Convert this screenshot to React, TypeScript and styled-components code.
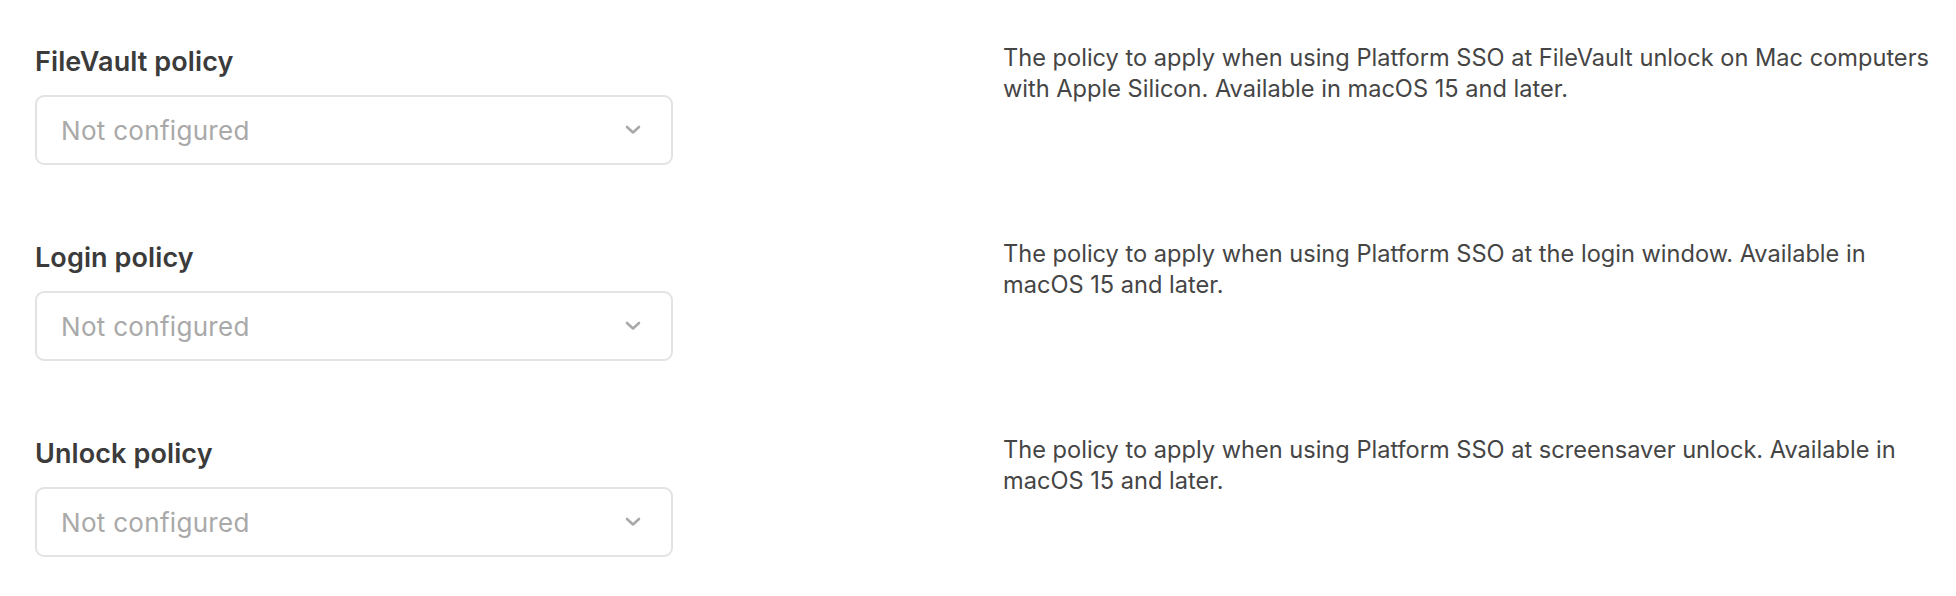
import React from "react";
import styled, { createGlobalStyle } from "styled-components";

const Global = createGlobalStyle`
  html, body { margin: 0; padding: 0; background: #ffffff; }
  body { font-family: Inter, "Noto Sans", sans-serif; -webkit-font-smoothing: antialiased; }
`;

const Page = styled.div`
  display: flex;
  flex-direction: column;
  gap: 77px;
  padding: 46px 13px 0 35px;
`;

const Row = styled.div`
  display: grid;
  grid-template-columns: 638px 1fr;
  column-gap: 330px;
  align-items: start;
`;

const Field = styled.div`
  display: flex;
  flex-direction: column;
  gap: 17px;
`;

const Label = styled.label`
  font-size: 27px;
  font-weight: 600;
  color: #3b3b3b;
  line-height: 32px;
  letter-spacing: 0.1px;
`;

const Select = styled.div`
  box-sizing: border-box;
  height: 70px;
  border: 2px solid #e3e3e3;
  border-radius: 9px;
  display: flex;
  align-items: center;
  justify-content: space-between;
  padding: 0 30px 0 24px;
  background: #fff;
`;

const Placeholder = styled.span`
  font-size: 26px;
  color: #a9a9a9;
  letter-spacing: 0.3px;
`;

const Description = styled.p`
  margin: -4px 0 0;
  font-size: 23.6px;
  line-height: 31px;
  color: #454545;
`;

const Chevron = () => (
  <svg width="16" height="10" viewBox="0 0 16 10" fill="none">
    <path d="M2 2l6 5.5L14 2" stroke="#a9a9a9" strokeWidth="2.6" strokeLinecap="round" strokeLinejoin="round" />
  </svg>
);

const items = [
  {
    label: "FileVault policy",
    desc: "The policy to apply when using Platform SSO at FileVault unlock on Mac computers with Apple Silicon. Available in macOS 15 and later.",
  },
  {
    label: "Login policy",
    desc: "The policy to apply when using Platform SSO at the login window. Available in macOS 15 and later.",
  },
  {
    label: "Unlock policy",
    desc: "The policy to apply when using Platform SSO at screensaver unlock. Available in macOS 15 and later.",
  },
];

export default function App() {
  return (
    <>
      <Global />
      <Page>
        {items.map((it) => (
          <Row key={it.label}>
            <Field>
              <Label>{it.label}</Label>
              <Select>
                <Placeholder>Not configured</Placeholder>
                <Chevron />
              </Select>
            </Field>
            <Description>{it.desc}</Description>
          </Row>
        ))}
      </Page>
    </>
  );
}
